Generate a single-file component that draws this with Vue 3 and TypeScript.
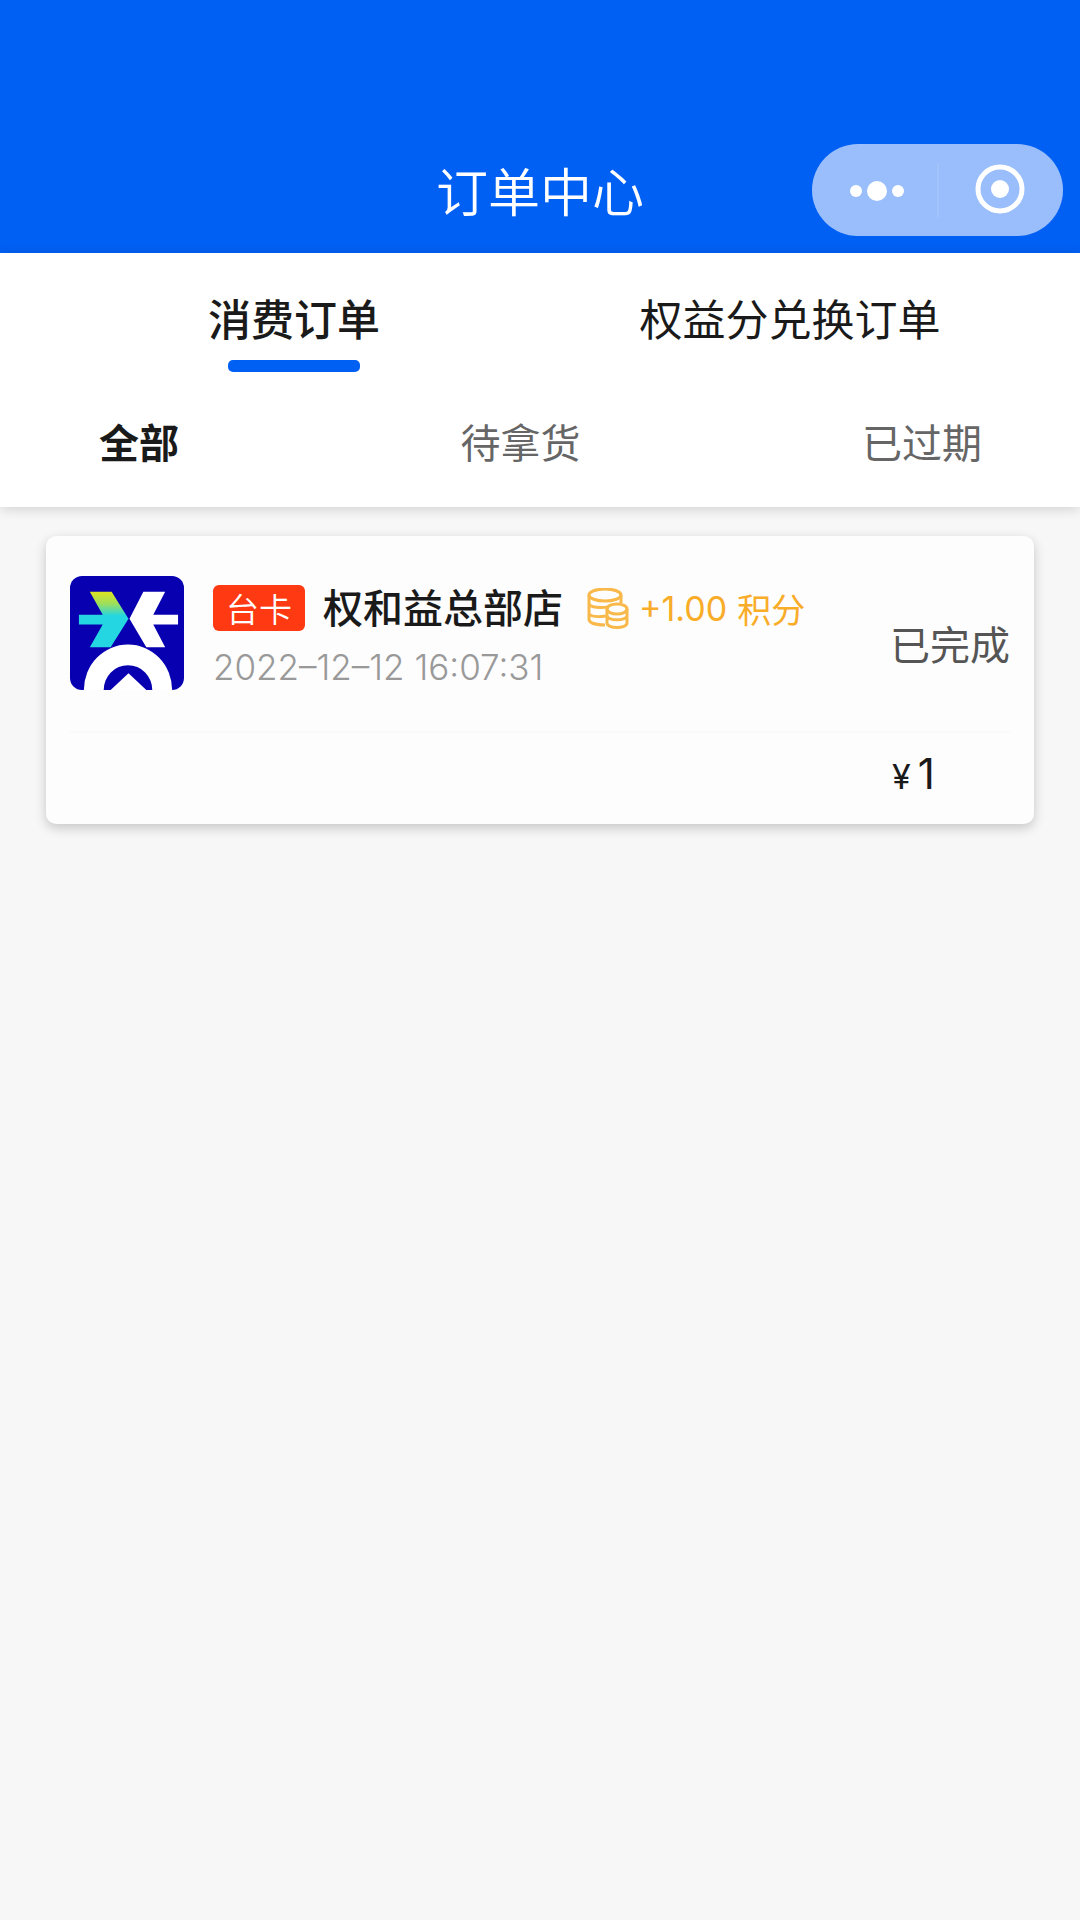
<script setup lang="ts">
import { ref } from 'vue'

interface Order {
  id: number
  tag: string
  store: string
  points: string
  time: string
  status: string
  amount: number
}

const tabs: string[] = ['消费订单', '权益分兑换订单']
const filters: string[] = ['全部', '待拿货', '已过期']
const activeTab = ref(0)
const activeFilter = ref(0)

const orders: Order[] = [
  {
    id: 1,
    tag: '台卡',
    store: '权和益总部店',
    points: '+1.00',
    time: '2022–12–12 16:07:31',
    status: '已完成',
    amount: 1,
  },
]
</script>

<template>
  <div class="page">
    <header class="header">
      <h1 class="title">订单中心</h1>
      <div class="capsule">
        <button class="capsule-btn" type="button" aria-label="更多">
          <svg width="64" height="56" viewBox="0 0 64 56" fill="#fff">
            <circle cx="14" cy="29" r="6" />
            <circle cx="35" cy="29" r="10" />
            <circle cx="56" cy="29" r="6" />
          </svg>
        </button>
        <span class="capsule-line"></span>
        <button class="capsule-btn" type="button" aria-label="关闭">
          <svg width="56" height="56" viewBox="0 0 56 56" fill="none">
            <circle cx="27" cy="27" r="22" stroke="#fff" stroke-width="5" />
            <circle cx="27" cy="27" r="9" fill="#fff" />
          </svg>
        </button>
      </div>
    </header>

    <nav class="panel">
      <div class="tabs">
        <button
          v-for="(tab, i) in tabs"
          :key="tab"
          type="button"
          class="tab"
          :class="{ active: i === activeTab }"
          @click="activeTab = i"
        >
          {{ tab }}
        </button>
      </div>
      <div class="filters">
        <button
          v-for="(item, i) in filters"
          :key="item"
          type="button"
          class="filter"
          :class="{ active: i === activeFilter }"
          @click="activeFilter = i"
        >
          {{ item }}
        </button>
      </div>
    </nav>

    <main class="list">
      <article v-for="order in orders" :key="order.id" class="card">
        <div class="card-main">
          <svg class="logo" viewBox="0 0 115 115">
            <defs>
              <linearGradient id="arrow" x1="0" y1="17" x2="0" y2="72" gradientUnits="userSpaceOnUse">
                <stop offset="0" stop-color="#d8e426" />
                <stop offset="0.2" stop-color="#9ddf5c" />
                <stop offset="0.42" stop-color="#24d6e2" />
                <stop offset="1" stop-color="#24d6e2" />
              </linearGradient>
            </defs>
            <rect width="115" height="115" fill="#0800b0" />
            <path d="M20 16H42L59 43L41 72H20L33 49H9V39H33Z" fill="url(#arrow)" />
            <path d="M96 16H74L60 43L77 72H96L84 49H109V39H84Z" fill="#fff" />
            <path d="M14 115A44.5 46 0 0 1 103 115H83A24.5 25 0 0 0 34 115Z" fill="#fff" />
            <path d="M41 115L59 98L77 115Z" fill="#fff" />
          </svg>
          <div class="info">
            <div class="store-row">
              <span class="tag">{{ order.tag }}</span>
              <h2 class="store">{{ order.store }}</h2>
              <span class="points">
                <svg width="42" height="42" viewBox="0 0 42 42" fill="none" stroke="#f8b94a" stroke-width="3">
                  <ellipse cx="18" cy="7" rx="16" ry="6" />
                  <path d="M2 7V31C2 35 9 37 18 37M34 7V15M2 16C4 20 12 20 22 19M2 26C5 29 12 29 19 28" />
                  <ellipse cx="30" cy="21" rx="10" ry="5" />
                  <path d="M20 21V35C20 41 40 41 40 35V21M20 28C22 33 38 33 40 28" />
                </svg>
                <span class="points-value">{{ order.points }}</span>
                <span>积分</span>
              </span>
            </div>
            <time class="time">{{ order.time }}</time>
          </div>
          <span class="status">{{ order.status }}</span>
        </div>
        <div class="card-foot">
          <span class="amount"><span class="currency">¥</span>{{ order.amount }}</span>
        </div>
      </article>
    </main>
  </div>
</template>

<style>
body {
  margin: 0;
  background: #f7f7f7;
}
</style>

<style scoped>
.page {
  min-height: 100vh;
  background: #f7f7f7;
  color: #1a1a1a;
  font-family: 'Noto Sans CJK SC', sans-serif;
}

button {
  margin: 0;
  padding: 0;
  border: 0;
  background: none;
  color: inherit;
  font: inherit;
  cursor: pointer;
}

svg {
  display: block;
}

.header {
  display: grid;
  grid-template-columns: 1fr auto 1fr;
  align-items: center;
  padding: 144px 17px 17px;
  background: #0160f4;
  color: #fff;
}

.title {
  grid-column: 2;
  margin: 0;
  font-size: 52px;
  font-weight: 350;
  line-height: 90px;
}

.capsule {
  display: flex;
  align-items: center;
  justify-self: end;
  width: 251px;
  height: 92px;
  border-radius: 46px;
  background: #99befb;
}

.capsule-btn {
  display: flex;
  flex: 1;
  justify-content: center;
}

.capsule-line {
  width: 2px;
  height: 54px;
  background: #a3c4fb;
}

.panel {
  position: relative;
  padding: 34px 0 36px;
  background: #fff;
  box-shadow: 0 2px 12px rgba(0, 0, 0, 0.16);
}

.tabs {
  display: flex;
  padding: 0 42px 0 46px;
}

.tab {
  display: flex;
  flex: 1;
  flex-direction: column;
  align-items: center;
  gap: 13px;
  font-size: 43px;
  line-height: 60px;
}

.tab.active {
  font-weight: 500;
}

.tab.active::after {
  content: '';
  width: 132px;
  height: 12px;
  border-radius: 5px;
  background: #0160f4;
}

.filters {
  display: flex;
  justify-content: space-between;
  padding: 39px 98px 0 99px;
}

.filter {
  color: #666;
  font-size: 40px;
  line-height: 60px;
}

.filter.active {
  color: #1a1a1a;
  font-weight: 700;
}

.list {
  padding: 29px 46px;
}

.card {
  padding: 0 24px;
  border-radius: 10px;
  background: #fdfdfd;
  box-shadow: 0 4px 12px rgba(0, 0, 0, 0.2);
}

.card-main {
  display: flex;
  align-items: flex-start;
  padding: 40px 0 33px;
  border-bottom: 2px solid #fafafa;
}

.logo {
  width: 114px;
  height: 114px;
  margin-right: 29px;
  border-radius: 12px;
}

.info {
  flex: 1;
}

.store-row {
  display: flex;
  align-items: center;
}

.tag {
  margin-top: 4px;
  padding: 0 13px;
  border-radius: 6px;
  background: #ff3a12;
  color: #fff;
  font-size: 33px;
  font-weight: 350;
  line-height: 46px;
}

.store {
  margin: 0 24px 0 18px;
  font-size: 40px;
  font-weight: 500;
  line-height: 60px;
}

.points {
  display: flex;
  align-items: center;
  gap: 10px;
  margin-top: 6px;
  color: #f8ac28;
  font-size: 34px;
  line-height: 46px;
}

.points-value {
  font-family: Inter, sans-serif;
}

.time {
  display: block;
  color: #999;
  font-family: Inter, sans-serif;
  font-size: 35px;
  font-weight: 300;
  line-height: 62px;
}

.status {
  width: 120px;
  padding-top: 37px;
  color: #555;
  font-size: 40px;
  line-height: 60px;
}

.card-foot {
  display: flex;
  justify-content: flex-end;
  padding: 6px 0 12px;
}

.amount {
  display: flex;
  align-items: baseline;
  gap: 7px;
  width: 118px;
  font-family: Inter, sans-serif;
  font-size: 42px;
  line-height: 70px;
}

.currency {
  font-size: 34px;
}
</style>
